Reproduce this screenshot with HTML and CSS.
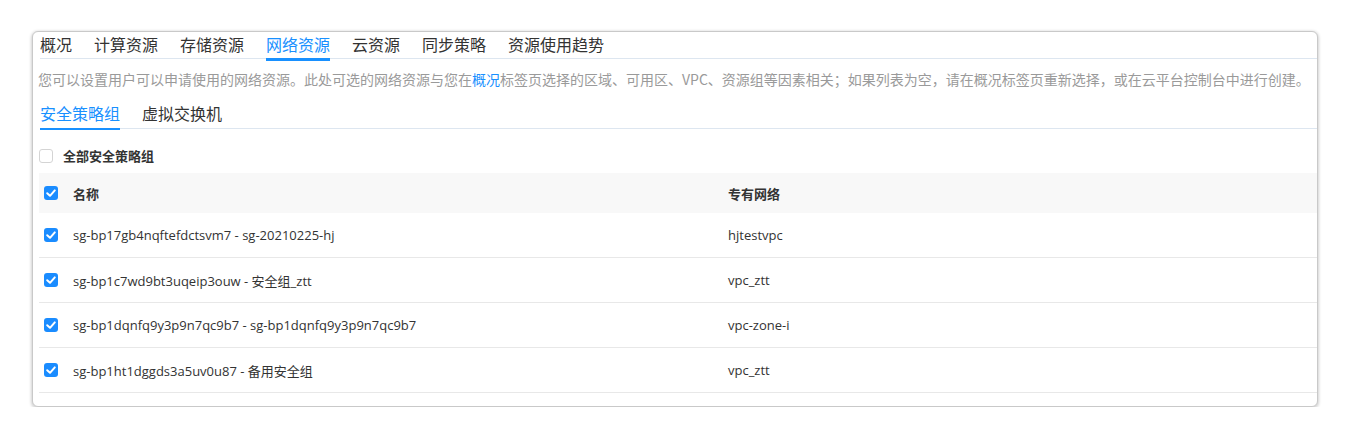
FILE: index.html
```html
<!DOCTYPE html>
<html lang="zh-CN">
<head>
<meta charset="utf-8">
<title>网络资源</title>
<link rel="stylesheet" href="styles.css">
</head>
<body>
<div class="page">
  <div class="panel">
    <div class="tabs">
      <span class="tab">概况</span>
      <span class="tab">计算资源</span>
      <span class="tab">存储资源</span>
      <span class="tab active">网络资源</span>
      <span class="tab">云资源</span>
      <span class="tab">同步策略</span>
      <span class="tab">资源使用趋势</span>
    </div>
    <p class="desc">您可以设置用户可以申请使用的网络资源。此处可选的网络资源与您在<a class="link">概况</a>标签页选择的区域、可用区、VPC、资源组等因素相关；如果列表为空，请在概况标签页重新选择，或在云平台控制台中进行创建。</p>
    <div class="subtabs">
      <span class="subtab active">安全策略组</span>
      <span class="subtab">虚拟交换机</span>
    </div>
    <label class="all">
      <span class="cb"></span>
      <span class="all-label">全部安全策略组</span>
    </label>
    <div class="table">
      <div class="row head">
        <div class="cell cbcell"><span class="cb on"><svg viewBox="0 0 14 14"><path d="M3.2 7.2 L6 9.8 L10.8 4.4"/></svg></span></div>
        <div class="cell">名称</div>
        <div class="cell">专有网络</div>
      </div>
      <div class="row">
        <div class="cell cbcell"><span class="cb on"><svg viewBox="0 0 14 14"><path d="M3.2 7.2 L6 9.8 L10.8 4.4"/></svg></span></div>
        <div class="cell">sg-bp17gb4nqftefdctsvm7 - sg-20210225-hj</div>
        <div class="cell">hjtestvpc</div>
      </div>
      <div class="row">
        <div class="cell cbcell"><span class="cb on"><svg viewBox="0 0 14 14"><path d="M3.2 7.2 L6 9.8 L10.8 4.4"/></svg></span></div>
        <div class="cell">sg-bp1c7wd9bt3uqeip3ouw - 安全组_ztt</div>
        <div class="cell">vpc_ztt</div>
      </div>
      <div class="row">
        <div class="cell cbcell"><span class="cb on"><svg viewBox="0 0 14 14"><path d="M3.2 7.2 L6 9.8 L10.8 4.4"/></svg></span></div>
        <div class="cell">sg-bp1dqnfq9y3p9n7qc9b7 - sg-bp1dqnfq9y3p9n7qc9b7</div>
        <div class="cell">vpc-zone-i</div>
      </div>
      <div class="row">
        <div class="cell cbcell"><span class="cb on"><svg viewBox="0 0 14 14"><path d="M3.2 7.2 L6 9.8 L10.8 4.4"/></svg></span></div>
        <div class="cell">sg-bp1ht1dggds3a5uv0u87 - 备用安全组</div>
        <div class="cell">vpc_ztt</div>
      </div>
    </div>
  </div>
</div>
</body>
</html>
```

FILE: styles.css
```css
html, body {
  margin: 0;
  padding: 0;
  background: #ffffff;
}

body {
  font-family: "Open Sans", "Noto Sans CJK SC", sans-serif;
  color: #333333;
}

.page {
  padding: 31px 32px 0 32px;
}

.panel {
  border: 1px solid #c9c9c9;
  border-radius: 6px;
  box-shadow: 0 1px 3px 1px rgba(0, 0, 0, 0.18);
  padding: 0 0 13px 7px;
  background: #ffffff;
}

.tabs {
  display: flex;
  gap: 22px;
  border-bottom: 1px solid #dde6f0;
  font-family: "Noto Sans CJK SC", sans-serif;
  font-size: 16px;
  line-height: 22px;
}

.tab {
  position: relative;
  padding: 1px 0 3px;
  color: #333333;
}

.tab.active {
  color: #1890ff;
}

.tab.active::after {
  content: "";
  position: absolute;
  left: 0;
  right: 0;
  bottom: -3px;
  height: 3px;
  background: #1890ff;
}

.desc {
  margin: 10px 0 0 -2px;
  font-family: "Noto Sans CJK SC", sans-serif;
  font-size: 14px;
  line-height: 20px;
  color: #9a9a9a;
  white-space: nowrap;
}

.link {
  color: #1890ff;
}

.subtabs {
  display: flex;
  gap: 22px;
  margin-top: 12px;
  border-bottom: 1px solid #dde6f0;
  font-family: "Noto Sans CJK SC", sans-serif;
  font-size: 16px;
  line-height: 22px;
}

.subtab {
  position: relative;
  padding: 1px 0 4px;
  color: #333333;
}

.subtab.active {
  color: #1890ff;
}

.subtab.active::after {
  content: "";
  position: absolute;
  left: 0;
  right: 0;
  bottom: -2px;
  height: 2px;
  background: #1890ff;
}

.all {
  display: flex;
  align-items: center;
  gap: 10px;
  margin-top: 17px;
  margin-left: -1px;
  height: 20px;
}

.all-label {
  font-family: "Noto Sans CJK SC", sans-serif;
  font-size: 13px;
  font-weight: 700;
  color: #333333;
  line-height: 20px;
}

.cb {
  display: inline-flex;
  width: 14px;
  height: 14px;
  box-sizing: border-box;
  border: 1px solid #d4d4d4;
  border-radius: 3px;
  background: #ffffff;
}

.cb.on {
  border: none;
  background: #1a8cff;
}

.cb svg {
  width: 14px;
  height: 14px;
}

.cb svg path {
  fill: none;
  stroke: #ffffff;
  stroke-width: 2;
  stroke-linecap: round;
  stroke-linejoin: round;
}

.table {
  margin-top: 7px;
  margin-left: -1px;
  font-size: 13px;
}

.row {
  display: grid;
  grid-template-columns: 34px 655px 1fr;
  align-items: center;
  height: 44px;
  border-bottom: 1px solid #e8e8e8;
  color: #333333;
}

.row.head {
  height: 40px;
  border-bottom: none;
  background: #f8f8f8;
  font-family: "Noto Sans CJK SC", sans-serif;
  font-weight: 700;
}

.cell {
  white-space: nowrap;
}

.cbcell {
  display: flex;
  align-items: center;
  padding-left: 5px;
}
```
